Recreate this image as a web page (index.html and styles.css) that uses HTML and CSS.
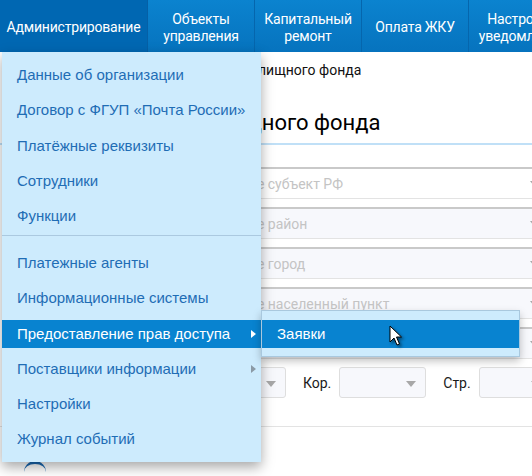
FILE: index.html
```html
<!DOCTYPE html>
<html lang="ru">
<head>
<meta charset="utf-8">
<title>Администрирование</title>
<link rel="stylesheet" href="styles.css">
</head>
<body>
<header class="nav">
  <div class="nav-item nav-item--active">Администрирование</div>
  <div class="nav-item">Объекты<br>управления</div>
  <div class="nav-item">Капитальный<br>ремонт</div>
  <div class="nav-item">Оплата ЖКУ</div>
  <div class="nav-item">Настройки<br>уведомлений</div>
</header>

<main class="content">
  <div class="crumbs">Главная &nbsp;/&nbsp; Реестр объектов жилищного фонда</div>
  <h1 class="title">Реестр объектов жилищного фонда</h1>
  <div class="filters">
    <div class="field field--white"><span class="ph">Выберите субъект РФ</span><span class="caret"></span></div>
    <div class="field"><span class="ph">Выберите район</span><span class="caret"></span></div>
    <div class="field"><span class="ph">Выберите город</span><span class="caret"></span></div>
    <div class="field"><span class="ph">Выберите населенный пункт</span><span class="caret"></span></div>
    <div class="field"><span class="ph">Выберите улицу</span><span class="caret"></span></div>
    <div class="addr-row">
      <span class="lbl lbl--first">Дом</span>
      <div class="sel"><span class="caret"></span></div>
      <span class="lbl">Кор.</span>
      <div class="sel"><span class="caret"></span></div>
      <span class="lbl">Стр.</span>
      <div class="sel sel--last"><span class="caret"></span></div>
    </div>
  </div>
  <div class="divider"></div>
  <div class="ring"></div>
</main>

<nav class="menu">
  <ul class="menu-group">
    <li class="menu-item">Данные об организации</li>
    <li class="menu-item">Договор с ФГУП «Почта России»</li>
    <li class="menu-item">Платёжные реквизиты</li>
    <li class="menu-item">Сотрудники</li>
    <li class="menu-item">Функции</li>
  </ul>
  <ul class="menu-group menu-group--second">
    <li class="menu-item">Платежные агенты</li>
    <li class="menu-item">Информационные системы</li>
    <li class="menu-item menu-item--hover has-sub">Предоставление прав доступа
      <ul class="submenu">
        <li class="menu-item menu-item--hover">Заявки</li>
      </ul>
    </li>
    <li class="menu-item has-sub">Поставщики информации</li>
    <li class="menu-item">Настройки</li>
    <li class="menu-item">Журнал событий</li>
  </ul>
</nav>

<svg class="cursor" width="16" height="22" viewBox="0 0 16 22" aria-hidden="true">
  <path d="M1 1 L1 17 L5 13 L8 20 L10.5 19 L7.5 12 L12.5 12 Z" fill="#fff" stroke="#000" stroke-width="1" stroke-linejoin="miter"/>
</svg>
</body>
</html>
```

FILE: styles.css
```css
* { box-sizing: border-box; }
html, body { margin: 0; padding: 0; }
body {
  width: 532px;
  height: 476px;
  overflow: hidden;
  position: relative;
  background: #fff;
  font-family: Roboto, "Liberation Sans", sans-serif;
  color: #111;
}

/* top navigation */
.nav {
  display: flex;
  height: 52px;
  background: linear-gradient(#0b83cf, #0673be);
  white-space: nowrap;
}
.nav-item {
  flex: none;
  width: 107px;
  border-right: 1px solid #0566ad;
  color: #fff;
  font-size: 14px;
  line-height: 17px;
  letter-spacing: -0.2px;
  text-align: center;
  display: flex;
  align-items: center;
  justify-content: center;
  padding-top: 3px;
}
.nav-item--active {
  width: 148px;
  background: #0067b2;
  border-right-color: #0560a6;
}

/* page content (behind the dropdown) */
.content {
  padding: 0;
}
.crumbs {
  font-size: 14px;
  line-height: 16px;
  padding: 10px 0 0 52px;
  color: #111;
  white-space: nowrap;
}
.title {
  margin: 0;
  font-weight: 400;
  font-size: 22px;
  line-height: 30px;
  padding: 30px 0 5px 9px;
  border-bottom: 2px solid #c0e0f7;
  color: #000;
  white-space: nowrap;
}
.filters {
  display: flex;
  flex-direction: column;
  gap: 8px;
  padding: 22px 0 0 190px;
}
.field {
  height: 32px;
  border-top: 2px solid #c9c9c9;
  border-bottom: 1px solid #e3e3e3;
  background: #f7f8fc;
  display: flex;
  align-items: center;
  padding-left: 10px;
  margin-right: -20px;
  position: relative;
}
.field--white { background: #fff; }
.field .caret { right: 12px; top: 12px; }
.ph {
  font-size: 14px;
  color: #c4c4c4;
  white-space: nowrap;
}
.addr-row {
  display: flex;
  align-items: center;
  margin-left: -28px;
}
.lbl {
  font-size: 14px;
  color: #1a1a1a;
  margin: 0 8px 0 17px;
  flex: none;
}
.lbl--first { margin-left: 0; }
.sel {
  width: 87px;
  height: 31px;
  border: 1px solid #dedede;
  border-radius: 3px;
  background: #f7f8fc;
  position: relative;
  flex: none;
}
.caret {
  position: absolute;
  right: 9px;
  top: 13px;
  border-left: 5px solid transparent;
  border-right: 5px solid transparent;
  border-top: 6px solid #a8a8a8;
}
.sel--last .caret { right: 24px; }
.divider {
  height: 1px;
  background: #e3e3e3;
  margin: 28px 0 0;
}
.ring {
  width: 22px;
  height: 22px;
  border-radius: 50%;
  border-top: 3px solid #1868b2;
  margin: 34px 0 0 24px;
}

/* dropdown menu */
.menu {
  position: absolute;
  left: 2px;
  top: 52px;
  width: 259px;
  background: #cdebfd;
  box-shadow: 0 5px 12px rgba(0, 0, 0, 0.35);
  font-family: "Liberation Sans", Arial, sans-serif;
  padding: 9px 0 9px;
}
.menu-group {
  list-style: none;
  margin: 0;
  padding: 0 0 5px;
  display: flex;
  flex-direction: column;
  gap: 7.25px;
}
.menu-group--second {
  border-top: 1px solid #abc9e0;
  padding: 13px 0 0;
}
.menu-item {
  height: 28px;
  line-height: 28px;
  font-size: 15px;
  color: #1f6db5;
  padding-left: 15px;
  white-space: nowrap;
  position: relative;
}
.menu-item--hover {
  background: #0883d0;
  color: #fff;
}
.has-sub::after {
  content: "";
  position: absolute;
  right: 5px;
  top: 10px;
  border-top: 4px solid transparent;
  border-bottom: 4px solid transparent;
  border-left: 5px solid #8b9aa6;
}
.menu-item--hover.has-sub::after { border-left-color: #fff; }

.submenu {
  list-style: none;
  margin: 0;
  position: absolute;
  left: 259px;
  top: -9.5px;
  width: 259px;
  background: #cdebfd;
  border: 1px solid #a9c8de;
  padding: 9px 0 8px;
  box-shadow: 0 4px 8px rgba(0, 0, 0, 0.25);
}
.submenu .menu-item { padding-left: 15px; }

.cursor {
  position: absolute;
  left: 389px;
  top: 325px;
  filter: drop-shadow(2px 2px 1.5px rgba(0, 0, 0, 0.45));
}
```
